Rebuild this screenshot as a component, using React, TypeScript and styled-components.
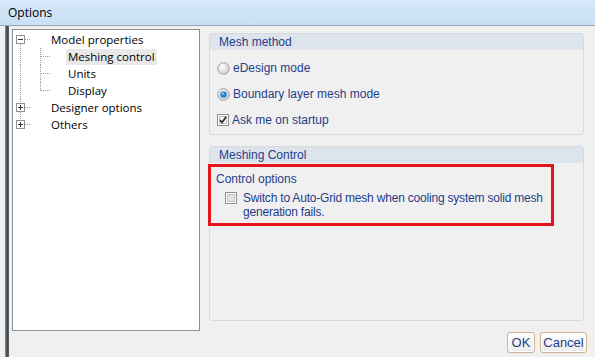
import * as React from 'react';
import styled, { createGlobalStyle } from 'styled-components';

const GlobalStyle = createGlobalStyle`
  html, body {
    margin: 0;
    padding: 0;
    background: #f0f0f0;
  }
`;

const Window = styled.div`
  width: 595px;
  height: 357px;
  overflow: hidden;
  background: #f0f0f0;
  display: flex;
  flex-direction: column;
  font-family: 'Liberation Sans', Arial, sans-serif;
`;

const TitleBar = styled.div`
  height: 25px;
  flex: none;
  display: flex;
  align-items: center;
  padding-left: 8px;
  background: linear-gradient(to bottom, #d6e8f9, #c8dff5);
  border-bottom: 1px solid #93a5b8;
  font-family: 'Open Sans', 'Noto Sans', sans-serif;
  font-size: 12px;
  color: #000;
`;

const Body = styled.div`
  flex: 1;
  display: flex;
  min-height: 0;
`;

const FrameEdge = styled.div`
  width: 4px;
  margin-left: 5px;
  flex: none;
  background: linear-gradient(to right, #8b939b, #3e454c, #5d656c);
`;

const TreeBox = styled.div`
  width: 186px;
  height: 299px;
  margin: 3px 0 0 3px;
  flex: none;
  background: #fff;
  border: 1px solid #8d9095;
  padding-top: 1px;
  box-sizing: content-box;
  font-family: 'Open Sans', 'Noto Sans', sans-serif;
  font-size: 11.5px;
  color: #000;
`;

const TreeRow = styled.div`
  height: 17px;
  display: flex;
  align-items: center;
`;

const Label = styled.span<{ $selected?: boolean }>`
  height: 16px;
  line-height: 16px;
  padding: 0 2px;
  white-space: nowrap;
  background: ${(p) => (p.$selected ? '#e9e9e9' : 'transparent')};
`;

const RightColumn = styled.div`
  width: 378px;
  margin-left: 9px;
  display: flex;
  flex-direction: column;
`;

const Group = styled.div<{ $height: number }>`
  margin-right: 3px;
  height: ${(p) => p.$height}px;
  border: 1px solid #d6dadf;
  border-radius: 3px;
  background: #f0f0f0;
  box-sizing: border-box;
  display: flex;
  flex-direction: column;
`;

const GroupHeader = styled.div`
  height: 16px;
  line-height: 16px;
  padding-left: 9px;
  background: #dee4eb;
  color: #1f3d8a;
  font-size: 12px;
`;

const OptionList = styled.div`
  display: flex;
  flex-direction: column;
  gap: 12px;
  padding: 11px 0 0 7px;
`;

const OptionRow = styled.div`
  display: flex;
  align-items: flex-start;
  gap: 3px;
  color: #1f3d8a;
  font-size: 12px;
  line-height: 14px;
  white-space: nowrap;
`;

const Highlight = styled.div`
  margin: 1px 0 0 -2px;
  width: 346px;
  height: 62px;
  border: 3px solid #e8141b;
  box-sizing: border-box;
  padding: 5px 0 0 5px;
  color: #1f3d8a;
  font-size: 12px;
`;

const SubTitle = styled.div`
  line-height: 14px;
  margin-bottom: 5px;
`;

const Indented = styled(OptionRow)`
  padding-left: 9px;
  gap: 6px;
  letter-spacing: -0.2px;
`;

const ButtonRow = styled.div`
  display: flex;
  justify-content: flex-end;
  gap: 5px;
  margin-top: 11px;
`;

const Button = styled.button<{ $width: number }>`
  width: ${(p) => p.$width}px;
  height: 21px;
  padding: 0;
  border: 1px solid #c9b48f;
  border-radius: 3px;
  background: linear-gradient(to bottom, #fdfdfd, #ececec);
  color: #1f3d8a;
  font-family: 'Liberation Sans', Arial, sans-serif;
  font-size: 13px;
  box-shadow: inset 0 0 0 1px #fff;
`;

const DOT = { stroke: '#9a9a9a', strokeWidth: 1, strokeDasharray: '1 1' };

function ExpandBox({ open }: { open: boolean }) {
  return (
    <g>
      <rect x={3.5} y={4.5} width={8} height={8} fill="#fff" stroke="#919191" />
      <line x1={5} y1={8.5} x2={10} y2={8.5} stroke="#333" />
      {!open && <line x1={7.5} y1={6} x2={7.5} y2={11} stroke="#333" />}
    </g>
  );
}

type RowKind = 'open' | 'closed' | 'closed-last' | 'child' | 'child-last';

function Gutter({ kind }: { kind: RowKind }) {
  const width = kind.startsWith('child') ? 53 : 36;
  return (
    <svg width={width} height={17} style={{ flex: 'none' }}>
      {kind === 'open' && (
        <>
          <ExpandBox open />
          <line x1={7.5} y1={13} x2={7.5} y2={17} {...DOT} />
          <line x1={12} y1={8.5} x2={18} y2={8.5} {...DOT} />
        </>
      )}
      {(kind === 'closed' || kind === 'closed-last') && (
        <>
          <line x1={7.5} y1={0} x2={7.5} y2={4} {...DOT} />
          <ExpandBox open={false} />
          {kind === 'closed' && <line x1={7.5} y1={13} x2={7.5} y2={17} {...DOT} />}
          <line x1={12} y1={8.5} x2={18} y2={8.5} {...DOT} />
        </>
      )}
      {kind.startsWith('child') && (
        <>
          <line x1={7.5} y1={0} x2={7.5} y2={17} {...DOT} />
          <line x1={27.5} y1={0} x2={27.5} y2={kind === 'child-last' ? 9 : 17} {...DOT} />
          <line x1={28} y1={8.5} x2={37} y2={8.5} {...DOT} />
        </>
      )}
    </svg>
  );
}

function Radio({ checked }: { checked?: boolean }) {
  return (
    <svg width={13} height={13} style={{ flex: 'none', marginTop: 1 }}>
      <defs>
        <radialGradient id={checked ? 'rOn' : 'rOff'} cx="40%" cy="35%" r="70%">
          <stop offset="0%" stopColor="#ffffff" />
          <stop offset="100%" stopColor="#c9c9c9" />
        </radialGradient>
      </defs>
      <circle cx={6.5} cy={6.5} r={5.8} fill={`url(#${checked ? 'rOn' : 'rOff'})`} stroke="#a3a3a3" />
      {checked && (
        <>
          <circle cx={6.5} cy={6.5} r={3.3} fill="#2b86c9" />
          <circle cx={5.8} cy={5.6} r={1.2} fill="#9fd3f5" />
        </>
      )}
    </svg>
  );
}

function CheckBox({ checked }: { checked?: boolean }) {
  return (
    <svg width={12} height={12} style={{ flex: 'none', marginTop: 1 }}>
      <rect x={0.5} y={0.5} width={11} height={11} fill="#fff" stroke="#8e8f8f" />
      <rect x={2.5} y={2.5} width={7} height={7} fill={checked ? '#f4f4f4' : '#e3e3e3'} stroke="#c4c4c4" />
      {checked && <path d="M3 6 L5 8.5 L9.2 2.8" fill="none" stroke="#222" strokeWidth={1.6} />}
    </svg>
  );
}

export default function App() {
  return (
    <>
      <GlobalStyle />
      <Window>
        <TitleBar>Options</TitleBar>
        <Body>
          <FrameEdge />
          <TreeBox>
            <TreeRow>
              <Gutter kind="open" />
              <Label>Model properties</Label>
            </TreeRow>
            <TreeRow>
              <Gutter kind="child" />
              <Label $selected>Meshing control</Label>
            </TreeRow>
            <TreeRow>
              <Gutter kind="child" />
              <Label>Units</Label>
            </TreeRow>
            <TreeRow>
              <Gutter kind="child-last" />
              <Label>Display</Label>
            </TreeRow>
            <TreeRow>
              <Gutter kind="closed" />
              <Label>Designer options</Label>
            </TreeRow>
            <TreeRow>
              <Gutter kind="closed-last" />
              <Label>Others</Label>
            </TreeRow>
          </TreeBox>
          <RightColumn>
            <Group $height={102} style={{ marginTop: 7 }}>
              <GroupHeader>Mesh method</GroupHeader>
              <OptionList>
                <OptionRow>
                  <Radio />
                  <span>eDesign mode</span>
                </OptionRow>
                <OptionRow>
                  <Radio checked />
                  <span>Boundary layer mesh mode</span>
                </OptionRow>
                <OptionRow>
                  <CheckBox checked />
                  <span>Ask me on startup</span>
                </OptionRow>
              </OptionList>
            </Group>
            <Group $height={175} style={{ marginTop: 11 }}>
              <GroupHeader>Meshing Control</GroupHeader>
              <Highlight>
                <SubTitle>Control options</SubTitle>
                <Indented>
                  <CheckBox />
                  <span>
                    Switch to Auto-Grid mesh when cooling system solid mesh
                    <br />
                    generation fails.
                  </span>
                </Indented>
              </Highlight>
            </Group>
            <ButtonRow>
              <Button $width={28}>OK</Button>
              <Button $width={47}>Cancel</Button>
            </ButtonRow>
          </RightColumn>
        </Body>
      </Window>
    </>
  );
}
